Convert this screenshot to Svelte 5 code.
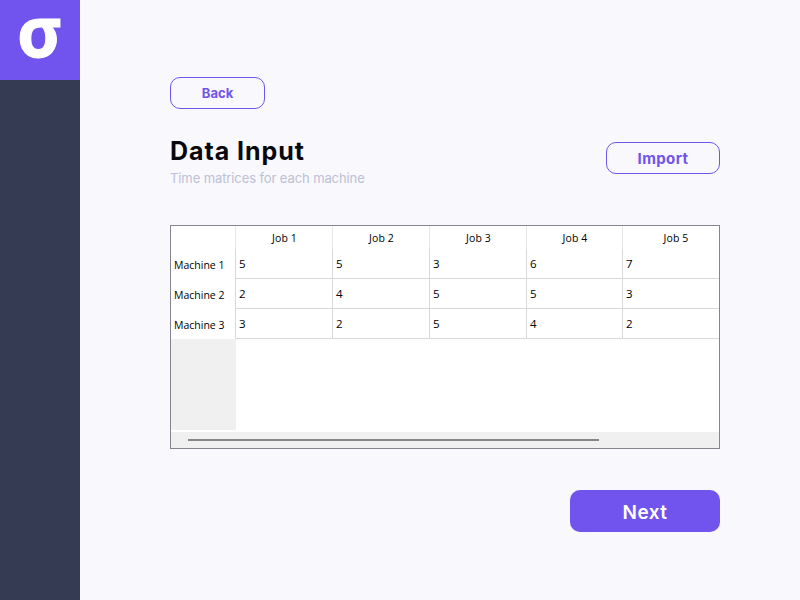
<script>
	const jobs = ['Job 1', 'Job 2', 'Job 3', 'Job 4', 'Job 5'];
	const rows = [
		{ name: 'Machine 1', values: [5, 5, 3, 6, 7] },
		{ name: 'Machine 2', values: [2, 4, 5, 5, 3] },
		{ name: 'Machine 3', values: [3, 2, 5, 4, 2] }
	];
</script>

<div class="app">
	<aside class="sidebar">
		<div class="logo">σ</div>
	</aside>

	<main class="main">
		<button class="btn-outline back">Back</button>

		<div class="heading">
			<div>
				<h1>Data Input</h1>
				<p>Time matrices for each machine</p>
			</div>
			<button class="btn-outline import">Import</button>
		</div>

		<div class="table-frame">
			<div class="table-view">
				<div class="corner"></div>
				{#each jobs as job}
					<div class="col-head">{job}</div>
				{/each}

				{#each rows as row}
					<div class="row-head">{row.name}</div>
					{#each row.values as value}
						<div class="cell">{value}</div>
					{/each}
				{/each}

				<div class="head-fill"></div>
				<div class="empty"></div>
			</div>
			<div class="scrollbar">
				<div class="thumb"></div>
			</div>
		</div>

		<div class="footer">
			<button class="next">Next</button>
		</div>
	</main>
</div>

<style>
	:global(body) {
		background: #f8f8fd;
	}

	.app {
		display: flex;
		width: 800px;
		height: 600px;
		overflow: hidden;
		font-family: 'Inter', 'Liberation Sans', sans-serif;
	}

	.sidebar {
		width: 80px;
		flex-shrink: 0;
		background: #363b54;
	}

	.logo {
		display: flex;
		align-items: center;
		justify-content: center;
		height: 80px;
		box-sizing: border-box;
		padding: 0 0 20px;
		background: #7054ed;
		color: #fff;
		font-family: 'Noto Sans', sans-serif;
		font-size: 70px;
		font-weight: 700;
		line-height: 60px;
		-webkit-text-stroke: 1px #fff;
	}

	.main {
		flex: 1;
		display: flex;
		flex-direction: column;
		padding: 77px 80px 0 90px;
	}

	.btn-outline {
		border: 1px solid #7054ed;
		background: transparent;
		color: #7054ed;
		font-family: inherit;
		font-weight: 700;
		padding: 0;
	}

	.back {
		width: 95px;
		height: 32px;
		border-radius: 10px;
		font-size: 13px;
	}

	.heading {
		display: flex;
		justify-content: space-between;
		align-items: flex-start;
		margin-top: 26px;
		height: 90px;
	}

	h1 {
		margin: 0;
		color: #08080c;
		font-size: 25px;
		line-height: 32px;
		font-weight: 700;
		letter-spacing: 0.95px;
	}

	p {
		margin: 3px 0 0;
		color: #bcc1d4;
		font-size: 13px;
		line-height: 16px;
		letter-spacing: -0.1px;
	}

	.import {
		width: 114px;
		height: 32px;
		margin-top: 7px;
		border-radius: 10px;
		font-size: 15px;
		letter-spacing: 0.4px;
	}

	.table-frame {
		width: 550px;
		height: 224px;
		box-sizing: border-box;
		border: 1px solid #85858f;
		background: #fff;
		display: flex;
		flex-direction: column;
		font-family: 'Open Sans', 'DejaVu Sans', sans-serif;
		font-size: 10.5px;
		color: #000;
	}

	/* the last column runs on past the frame, the scrollbar is not at its end */
	.table-view {
		flex: 1;
		display: grid;
		grid-template-columns: 64px 97px 97px 97px 96px 106px;
		grid-template-rows: 23px 30px 30px 30px 1fr;
		overflow: hidden;
	}

	.col-head {
		display: flex;
		align-items: center;
		justify-content: center;
		padding-left: 1px;
		border-left: 1px solid #e6e6e6;
		box-sizing: border-box;
		letter-spacing: 0.15px;
	}

	.row-head {
		display: flex;
		align-items: center;
		padding: 1px 0 0 3px;
		box-sizing: border-box;
	}

	.cell {
		display: flex;
		align-items: center;
		padding: 0 0 1px 3px;
		box-sizing: border-box;
		border-left: 1px solid #d8d8d8;
		border-bottom: 1px solid #d8d8d8;
		font-size: 11.5px;
	}

	.head-fill {
		background: #f0f0f0;
		margin: 0 -1px 1px 0;
	}

	.empty {
		grid-column: 2 / -1;
	}

	.scrollbar {
		height: 16px;
		margin-top: 1px;
		background: #f0f0f0;
		display: flex;
		align-items: center;
		padding-left: 17px;
	}

	.thumb {
		width: 411px;
		height: 2px;
		background: #868686;
	}

	.footer {
		display: flex;
		justify-content: flex-end;
		margin-top: 41px;
	}

	.next {
		width: 150px;
		height: 42px;
		border: none;
		border-radius: 10px;
		background: #7054ed;
		color: #fff;
		font-family: inherit;
		font-size: 19px;
		font-weight: 600;
		letter-spacing: 0.5px;
		padding: 3px 0 0;
	}
</style>
